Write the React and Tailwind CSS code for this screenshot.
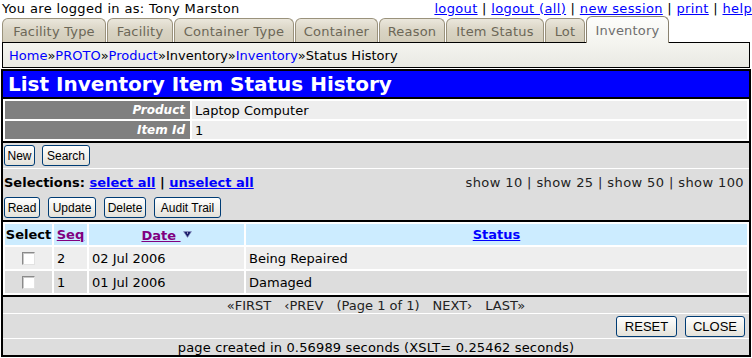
const tabs = [
    { label: "Facility Type", w: "w-[104px]" },
    { label: "Facility", w: "w-[66px]" },
    { label: "Container Type", w: "w-[120px]" },
    { label: "Container", w: "w-[83px]" },
    { label: "Reason", w: "w-[66px]" },
    { label: "Item Status", w: "w-[98px]" },
    { label: "Lot", w: "w-[40px]" },
];

const rows = [
    { seq: "2", date: "02 Jul 2006", status: "Being Repaired", bg: "bg-[#eeeeee]" },
    { seq: "1", date: "01 Jul 2006", status: "Damaged", bg: "bg-[#dddddd]" },
];

const Btn = ({ children, w, size = "text-[12px]" }) => (
    <button
        className={`${w} h-[21px] border border-[#003c74] rounded-[3px] bg-linear-to-b from-white to-[#e4e2da] ${size} leading-none text-black font-['Liberation_Sans',Arial,sans-serif]`}
    >
        {children}
    </button>
);

const Checkbox = () => (
    <span className="inline-block w-[13px] h-[13px] border border-t-[#8a8a8a] border-l-[#8a8a8a] border-r-[#e2e2e2] border-b-[#e2e2e2] bg-white shadow-[inset_1px_1px_0_#c8c8c8]" />
);

const SortArrow = () => (
    <svg width="9" height="7" viewBox="0 0 9 7" className="inline-block ml-[2px] mb-[3px]">
        <polygon points="0.5,0.5 8.5,0.5 4.5,6.5" fill="#1b1f6b" stroke="#8f93c4" strokeWidth="0.6" />
        <rect x="4" y="1.5" width="1" height="1" fill="#ffffff" />
    </svg>
);

const App = () => {
    return (
        <div className="w-[752px] h-[358px] overflow-hidden bg-white text-black text-[13px] font-['DejaVu_Sans',Verdana,sans-serif]">
            {/* logged in bar */}
            <div className="h-[16px] flex justify-between items-center pl-[2px] leading-none tracking-[0.35px]">
                <span>You are logged in as: Tony Marston</span>
                <span className="whitespace-pre">
                    <a className="text-[#0000ff] underline">logout</a>
                    {" | "}
                    <a className="text-[#0000ff] underline">logout (all)</a>
                    {" | "}
                    <a className="text-[#0000ff] underline">new session</a>
                    {" | "}
                    <a className="text-[#0000ff] underline">print</a>
                    {" | "}
                    <a className="text-[#0000ff] underline">help</a>
                </span>
            </div>

            {/* tabs */}
            <div className="h-[26px] flex items-end pl-[2px] gap-[1px] tracking-[0.2px]">
                {tabs.map((t) => (
                    <div
                        key={t.label}
                        className={`${t.w} h-[24px] flex items-center justify-center border border-b-0 border-[#9a927c] rounded-t-[6px] bg-linear-to-b from-[#ebe7dc] via-[#d9d4c4] to-[#d3cdbb] text-[#6c6757] leading-none pt-[1px]`}
                    >
                        {t.label}
                    </div>
                ))}
                <div className="relative z-10 -mb-px w-[83px] h-[27px] flex items-center justify-center border border-b-0 border-[#8a8270] rounded-t-[6px] bg-linear-to-b from-[#fdfdfb] to-[#f4f4ef] text-[#6e6e6e] leading-none">
                    Inventory
                </div>
            </div>

            {/* breadcrumb */}
            <div className="ml-[2px] w-[748px] h-[26px] border border-black bg-linear-to-b from-[#f4f4ef] to-[#e9e9e3] flex items-center pl-[6px] leading-none">
                <a className="text-[#0000ff]">Home</a>»<a className="text-[#0000ff]">PROTO</a>»
                <a className="text-[#0000ff]">Product</a>»Inventory»<a className="text-[#0000ff]">Inventory</a>»Status History
            </div>

            {/* main box */}
            <div className="mt-[1px] ml-[1px] w-[750px] h-[288px] border-2 border-black flex flex-col">
                <div className="h-[28px] bg-[#0000ff] border-b-2 border-black flex items-center pl-[5px] text-white font-bold text-[20px] leading-none">
                    List Inventory Item Status History
                </div>

                <div className="p-[2px] flex flex-col gap-[2px] border-b-2 border-black">
                    {[
                        ["Product", "Laptop Computer"],
                        ["Item Id", "1"],
                    ].map(([label, value]) => (
                        <div key={label} className="h-[18px] flex gap-[2px] leading-none">
                            <div className="w-[185px] bg-[#808080] text-white font-bold italic text-[12px] flex items-center justify-end pr-[5px]">
                                {label}
                            </div>
                            <div className="flex-1 bg-[#eeeeee] flex items-center pl-[3px]">{value}</div>
                        </div>
                    ))}
                </div>

                <div className="h-[26px] bg-[#dddddd] border-b border-white flex items-start pt-[2px] pl-[1px] gap-[7px]">
                    <Btn w="w-[31px]">New</Btn>
                    <Btn w="w-[48px]">Search</Btn>
                </div>

                <div className="h-[53px] bg-[#dddddd] border-b-2 border-black flex flex-col leading-none">
                    <div className="h-[27px] flex items-center justify-between pl-[1px] pr-[5px]">
                        <span className="font-bold whitespace-pre">
                            Selections: <a className="text-[#0000ff] underline">select all</a> |{" "}
                            <a className="text-[#0000ff] underline">unselect all</a>
                        </span>
                        <span className="whitespace-pre text-[#222] tracking-[0.4px]">show 10 | show 25 | show 50 | show 100</span>
                    </div>
                    <div className="flex pl-[1px] gap-[8px] pt-[1px]">
                        <Btn w="w-[36px]">Read</Btn>
                        <Btn w="w-[48px]">Update</Btn>
                        <Btn w="w-[42px]">Delete</Btn>
                        <Btn w="w-[67px]">Audit Trail</Btn>
                    </div>
                </div>

                <div className="p-[2px] grid grid-cols-[47px_33px_155px_1fr] auto-rows-[22px] grid-rows-[21px] gap-[2px] border-b-2 border-black leading-none">
                    <div className="bg-[#ccecff] flex items-center justify-center font-bold">Select</div>
                    <div className="bg-[#ccecff] flex items-center justify-center font-bold">
                        <a className="text-[#800080] underline">Seq</a>
                    </div>
                    <div className="bg-[#ccecff] flex items-center justify-center font-bold pt-[2px]">
                        <a className="text-[#800080] underline whitespace-pre">Date </a>
                        <SortArrow />
                    </div>
                    <div className="bg-[#ccecff] flex items-center justify-center font-bold">
                        <a className="text-[#0000ff] underline">Status</a>
                    </div>
                    {rows.map((r) => (
                        <div key={r.seq} className="contents">
                            <div className={`${r.bg} flex items-center justify-center`}>
                                <Checkbox />
                            </div>
                            <div className={`${r.bg} flex items-center pl-[3px]`}>{r.seq}</div>
                            <div className={`${r.bg} flex items-center pl-[3px]`}>{r.date}</div>
                            <div className={`${r.bg} flex items-center pl-[3px]`}>{r.status}</div>
                        </div>
                    ))}
                </div>

                <div className="h-[17px] bg-[#dddddd] border-b border-white flex items-center justify-center gap-[13px] leading-none text-[#222]">
                    <span>«FIRST</span>
                    <span>‹PREV</span>
                    <span>(Page 1 of 1)</span>
                    <span>NEXT›</span>
                    <span>LAST»</span>
                </div>

                <div className="h-[25px] bg-[#dddddd] border-b border-white flex items-center justify-end gap-[8px] pr-[4px]">
                    <Btn w="w-[61px]" size="text-[13px]">RESET</Btn>
                    <Btn w="w-[60px]" size="text-[13px]">CLOSE</Btn>
                </div>

                <div className="flex-1 bg-[#dddddd] flex items-center justify-center leading-none tracking-[0.15px]">
                    page created in 0.56989 seconds (XSLT= 0.25462 seconds)
                </div>
            </div>
        </div>
    );
};

export default App;
